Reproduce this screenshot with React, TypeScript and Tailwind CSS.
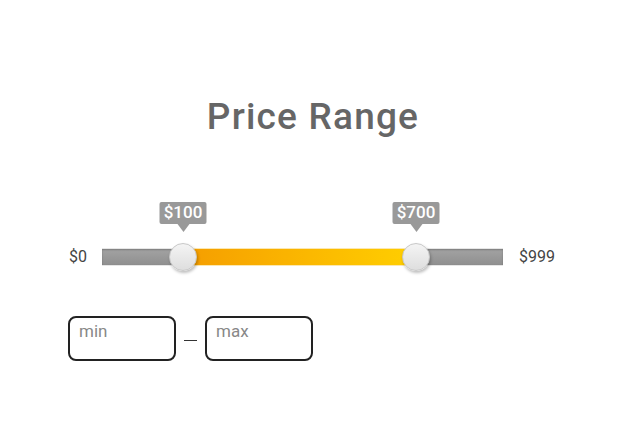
export default function App() {
  return (
    <div className="w-[626px] h-[447px] bg-white font-['Roboto',sans-serif] text-[#555]">
      <h1 className="pt-[95px] text-center text-[37px] font-medium tracking-[1.2px] text-[#666] leading-[44px]">
        Price Range
      </h1>

      {/* slider row */}
      <div className="mt-[106px] flex items-center pl-[69px]">
        <span className="w-[33px] text-[16px] text-[#444]">$0</span>
        <div className="relative h-[18px] w-[401px]">
          <div className="absolute inset-0 bg-gradient-to-b from-[#a3a3a3] to-[#8f8f8f] shadow-[inset_0_1px_2px_rgba(0,0,0,0.25)] border-y border-[#e6e6e6]" />
          <div className="absolute top-0 bottom-0 left-[81px] w-[233px] bg-gradient-to-r from-[#f59d00] to-[#ffcf00] border-y border-[#fbe7b0]" />

          {/* min thumb */}
          <div className="absolute left-[81px] top-1/2 -translate-x-1/2 -translate-y-1/2 w-[28px] h-[28px] rounded-full bg-gradient-to-b from-[#f4f4f4] to-[#dedede] border border-[#c8c8c8] shadow-[1px_2px_3px_rgba(0,0,0,0.25)]" />
          <div className="absolute left-[81px] bottom-[34px] -translate-x-1/2 flex flex-col items-center">
            <div className="w-[47px] h-[22px] flex items-center justify-center bg-[#999] text-white text-[17px] font-medium rounded-[2px]">
              $100
            </div>
            <div className="w-0 h-0 border-x-[6px] border-x-transparent border-t-[8px] border-t-[#999]" />
          </div>

          {/* max thumb */}
          <div className="absolute left-[314px] top-1/2 -translate-x-1/2 -translate-y-1/2 w-[28px] h-[28px] rounded-full bg-gradient-to-b from-[#f4f4f4] to-[#dedede] border border-[#c8c8c8] shadow-[1px_2px_3px_rgba(0,0,0,0.25)]" />
          <div className="absolute left-[314px] bottom-[34px] -translate-x-1/2 flex flex-col items-center">
            <div className="w-[47px] h-[22px] flex items-center justify-center bg-[#999] text-white text-[17px] font-medium rounded-[2px]">
              $700
            </div>
            <div className="w-0 h-0 border-x-[6px] border-x-transparent border-t-[8px] border-t-[#999]" />
          </div>
        </div>
        <span className="ml-[16px] text-[16px] text-[#444]">$999</span>
      </div>

      {/* inputs */}
      <div className="mt-[47px] flex items-center pl-[68px]">
        <div className="w-[108px] h-[45px] rounded-[8px] border-2 border-[#222] px-[9px] pt-[2px] text-[17px] text-[#888] leading-[22px]">
          min
        </div>
        <span className="mx-[8px] w-[13px] h-[1.5px] bg-[#333] mt-[4px]" />
        <div className="w-[108px] h-[45px] rounded-[8px] border-2 border-[#222] px-[9px] pt-[2px] text-[17px] text-[#888] leading-[22px]">
          max
        </div>
      </div>
    </div>
  );
}
